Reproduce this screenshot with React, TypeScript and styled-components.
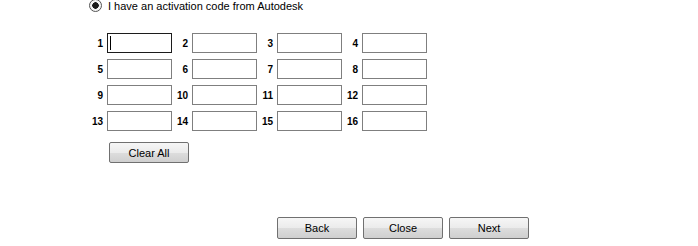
import React from "react";
import styled, { createGlobalStyle } from "styled-components";

const GlobalStyle = createGlobalStyle`
    html, body {
        margin: 0;
        padding: 0;
        background: #ffffff;
    }
    body {
        font-family: "Liberation Sans", Arial, sans-serif;
        color: #000000;
    }
`;

const Page = styled.div`
    width: 698px;
    height: 246px;
    overflow: hidden;
    box-sizing: border-box;
    padding-left: 87px;
    display: flex;
    flex-direction: column;
`;

const OptionRow = styled.label`
    display: flex;
    align-items: center;
    gap: 6px;
    margin: -1px 0 0 2px;
    height: 13px;
    font-size: 11px;
`;

const Radio = styled.span`
    width: 11px;
    height: 11px;
    border-radius: 50%;
    border: 1px solid #555555;
    background: radial-gradient(circle, #1a1a1a 0 3px, #f4f4f4 3.5px);
    flex: none;
`;

const CodeGrid = styled.div`
    display: grid;
    grid-template-columns: repeat(4, 85px);
    row-gap: 6px;
    margin-top: 21px;
`;

const Field = styled.div`
    display: flex;
    align-items: center;
`;

const FieldLabel = styled.span`
    width: 16px;
    margin-right: 4px;
    text-align: right;
    font-size: 10px;
    font-weight: bold;
`;

const CodeBox = styled.div<{ $focused?: boolean }>`
    position: relative;
    width: 65px;
    height: 20px;
    box-sizing: border-box;
    background: #ffffff;
    border: 1px solid ${(p) => (p.$focused ? "#1c1c1c" : "#7f7f7f")};

    ${(p) =>
        p.$focused &&
        `
        &::after {
            content: "";
            position: absolute;
            left: 2px;
            top: 2px;
            width: 1px;
            height: 14px;
            background: #000000;
        }
    `}
`;

const Button = styled.button`
    width: 80px;
    height: 22px;
    box-sizing: border-box;
    border: 1px solid #707070;
    border-radius: 2px;
    background: linear-gradient(#f6f6f6, #ebebeb 50%, #dddddd 51%, #cfcfcf);
    font-family: "Liberation Sans", Arial, sans-serif;
    font-size: 11px;
    color: #000000;
    padding: 0;
`;

const ClearButton = styled(Button)`
    height: 21px;
    margin: 11px 0 0 22px;
    align-self: flex-start;
`;

const NavRow = styled.div`
    display: flex;
    gap: 6px;
    margin: 54px 0 0 190px;
`;

const App: React.FC = () => {
    const fields = Array.from({ length: 16 }, (_, i) => i + 1);

    return (
        <>
            <GlobalStyle />
            <Page>
                <OptionRow>
                    <Radio />
                    I have an activation code from Autodesk
                </OptionRow>

                <CodeGrid>
                    {fields.map((n) => (
                        <Field key={n}>
                            <FieldLabel>{n}</FieldLabel>
                            <CodeBox $focused={n === 1} />
                        </Field>
                    ))}
                </CodeGrid>

                <ClearButton>Clear All</ClearButton>

                <NavRow>
                    <Button>Back</Button>
                    <Button>Close</Button>
                    <Button>Next</Button>
                </NavRow>
            </Page>
        </>
    );
};

export default App;
